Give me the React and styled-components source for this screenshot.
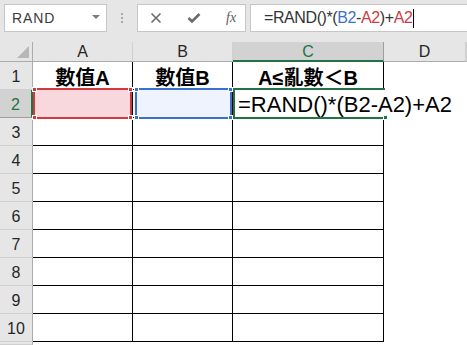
import React from "react";
import styled, { createGlobalStyle, css } from "styled-components";

const GlobalStyle = createGlobalStyle`
  html, body {
    margin: 0;
    padding: 0;
    background: #ffffff;
    overflow: hidden;
  }
  * {
    box-sizing: border-box;
  }
`;

const GREEN = "#217346";
const RED = "#d0393e";
const BLUE = "#3b71c9";

const Window = styled.div`
  width: 467px;
  height: 345px;
  display: flex;
  flex-direction: column;
  background: #ffffff;
  font-family: "Liberation Sans", Arial, sans-serif;
  overflow: hidden;
`;

const Toolbar = styled.div`
  height: 42px;
  flex: none;
  display: flex;
  align-items: flex-start;
  padding: 4px 0 0 4px;
  background: #e6e6e6;
`;

const NameBox = styled.div`
  width: 103px;
  height: 28px;
  display: flex;
  align-items: center;
  justify-content: space-between;
  padding: 0 6px 0 7px;
  background: #ffffff;
  border: 1px solid #c6c6c6;
  font-size: 14px;
  letter-spacing: 0.9px;
  color: #3a3a3a;
`;

const Caret = styled.span`
  width: 0;
  height: 0;
  border-left: 4px solid transparent;
  border-right: 4px solid transparent;
  border-top: 4px solid #7a7a7a;
  margin-top: -2px;
`;

const Grip = styled.div`
  width: 30px;
  height: 28px;
  display: flex;
  flex-direction: column;
  align-items: center;
  justify-content: center;
  gap: 2px;

  span {
    width: 2px;
    height: 2px;
    background: #a8a8a8;
  }
`;

const IconBox = styled.div`
  width: 109px;
  height: 28px;
  display: flex;
  align-items: center;
  padding-left: 12px;
  gap: 25px;
  background: #ffffff;
  border: 1px solid #c6c6c6;
`;

const Fx = styled.span`
  font-family: "Liberation Serif", "Times New Roman", serif;
  font-style: italic;
  font-size: 14px;
  color: #5c5c5c;
`;

const FormulaBox = styled.div`
  flex: 1;
  height: 28px;
  margin-left: 4px;
  display: flex;
  align-items: center;
  padding-left: 13px;
  background: #ffffff;
  border: 1px solid #c6c6c6;
  border-right: none;
  font-size: 16px;
  letter-spacing: -0.4px;
  color: #333333;
  white-space: nowrap;
`;

const Ref = styled.span`
  color: ${({ $color }) => $color};
`;

const TextCursor = styled.span`
  width: 1px;
  height: 19px;
  margin-left: 1px;
  background: #000000;
`;

const Sheet = styled.div`
  flex: 1;
  display: grid;
  grid-template-columns: 33px 100px 100px 151px 82px 1fr;
  grid-template-rows: 20px repeat(10, 28px) 1fr;
`;

const Corner = styled.div`
  position: relative;
  background: #e6e6e6;
  border-right: 1px solid #ababab;
  border-bottom: 1px solid #ababab;

  &::after {
    content: "";
    position: absolute;
    right: 3px;
    bottom: 3px;
    width: 0;
    height: 0;
    border-left: 12px solid transparent;
    border-bottom: 12px solid #b7b7b7;
  }
`;

const ColHead = styled.div`
  display: flex;
  align-items: center;
  justify-content: center;
  padding-top: 1px;
  background: ${({ $active }) => ($active ? "#d2d2d2" : "#e6e6e6")};
  border-right: 1px solid ${({ $active }) => ($active ? "#9f9f9f" : "#d0d0d0")};
  border-bottom: ${({ $active }) =>
    $active ? `2px solid ${GREEN}` : "1px solid #ababab"};
  font-size: 16px;
  color: ${({ $active }) => ($active ? GREEN : "#262626")};
`;

const RowHead = styled.div`
  display: flex;
  align-items: center;
  justify-content: center;
  padding-top: 2px;
  background: ${({ $active }) => ($active ? "#d2d2d2" : "#e6e6e6")};
  border-right: ${({ $active }) =>
    $active ? `2px solid ${GREEN}` : "1px solid #ababab"};
  border-bottom: 1px solid ${({ $active }) => ($active ? "#9f9f9f" : "#d0d0d0")};
  font-size: 16px;
  color: ${({ $active }) => ($active ? GREEN : "#262626")};
`;

const Cell = styled.div`
  position: relative;
  display: flex;
  align-items: center;
  justify-content: ${({ $align }) => $align || "flex-start"};
  background: ${({ $fill }) => $fill || "#ffffff"};
  ${({ $lined }) =>
    $lined &&
    css`
      border-right: 1px solid #000000;
      border-bottom: 1px solid #000000;
    `}
  ${({ $open }) =>
    $open &&
    css`
      border-right: none;
    `}
`;

const Title = styled.span`
  font-family: "Liberation Sans", "Noto Sans CJK TC", sans-serif;
  font-weight: bold;
  font-size: 20px;
  color: #000000;
  padding-top: 1px;
`;

const CellFormula = styled.span`
  position: relative;
  z-index: 2;
  margin-left: 5px;
  padding-top: 2px;
  font-size: 22px;
  color: #000000;
  white-space: nowrap;
`;

const Highlight = styled.div`
  position: absolute;
  top: -2px;
  left: ${({ $left }) => $left}px;
  right: ${({ $right }) => $right}px;
  bottom: -2px;
  border: 2px solid ${({ $color }) => $color};
  ${({ $open }) =>
    $open &&
    css`
      border-right: none;
    `}
  z-index: 1;
  pointer-events: none;
`;

const Handle = styled.span`
  position: absolute;
  width: 5px;
  height: 5px;
  background: ${({ $color }) => $color};
  border: 1px solid #ffffff;
  ${({ $v }) => ($v === "top" ? "top: -3px;" : "bottom: -3px;")}
  ${({ $h }) => ($h === "left" ? "left: -3px;" : "right: -3px;")}
`;

const CloseIcon = () => (
  <svg width="12" height="12" viewBox="0 0 12 12">
    <path d="M1.5 1.5 L10.5 10.5 M10.5 1.5 L1.5 10.5" stroke="#6b6b6b" strokeWidth="1.6" fill="none" />
  </svg>
);

const CheckIcon = () => (
  <svg width="14" height="12" viewBox="0 0 14 12">
    <path d="M1.5 6 L5 9.5 L12.5 2" stroke="#6b6b6b" strokeWidth="2.6" fill="none" />
  </svg>
);

const corners = [
  ["top", "left"],
  ["top", "right"],
  ["bottom", "left"],
  ["bottom", "right"],
];

const RefBox = ({ color, left = 0, right = 0, open, handles }) => (
  <Highlight $color={color} $left={left} $right={right} $open={open}>
    {handles.map(([v, h]) => (
      <Handle key={v + h} $color={color} $v={v} $h={h} />
    ))}
  </Highlight>
);

const rows = [1, 2, 3, 4, 5, 6, 7, 8, 9, 10];
const columns = ["A", "B", "C", "D"];

export default function App() {
  return (
    <Window>
      <GlobalStyle />
      <Toolbar>
        <NameBox>
          RAND
          <Caret />
        </NameBox>
        <Grip>
          <span />
          <span />
          <span />
        </Grip>
        <IconBox>
          <CloseIcon />
          <CheckIcon />
          <Fx>fx</Fx>
        </IconBox>
        <FormulaBox>
          =RAND()*(<Ref $color={BLUE}>B2</Ref>-<Ref $color={RED}>A2</Ref>)+
          <Ref $color={RED}>A2</Ref>
          <TextCursor />
        </FormulaBox>
      </Toolbar>

      <Sheet>
        <Corner />
        {columns.map((c) => (
          <ColHead key={c} $active={c === "C"}>
            {c}
          </ColHead>
        ))}
        <ColHead />

        {rows.map((r) => (
          <React.Fragment key={r}>
            <RowHead $active={r === 2}>{r}</RowHead>
            {r === 1 && (
              <>
                <Cell $lined $align="center">
                  <Title>數值A</Title>
                </Cell>
                <Cell $lined $align="center">
                  <Title>數值B</Title>
                </Cell>
                <Cell $lined $align="center">
                  <Title>A≤亂數＜B</Title>
                </Cell>
              </>
            )}
            {r === 2 && (
              <>
                <Cell $lined $fill="#f8d8dc">
                  <RefBox color={RED} right={0} handles={corners} />
                </Cell>
                <Cell $lined $fill="#eef3fd">
                  <RefBox color={BLUE} left={2} right={0} handles={corners} />
                </Cell>
                <Cell $lined $open>
                  <RefBox color={GREEN} left={0} right={-1} open handles={[["bottom", "right"]]} />
                  <CellFormula>=RAND()*(B2-A2)+A2</CellFormula>
                </Cell>
              </>
            )}
            {r > 2 && (
              <>
                <Cell $lined />
                <Cell $lined />
                <Cell $lined />
              </>
            )}
            <Cell />
            <Cell />
          </React.Fragment>
        ))}
        <RowHead />
      </Sheet>
    </Window>
  );
}
